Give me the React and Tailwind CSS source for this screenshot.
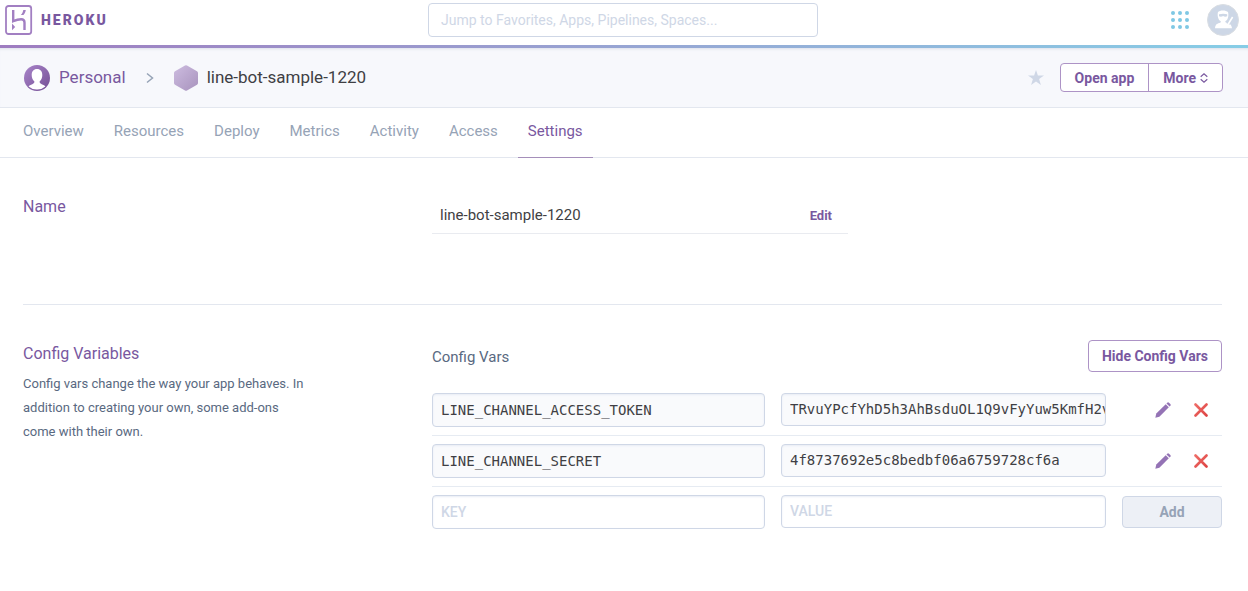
import React from "react";

const tabs = ["Overview", "Resources", "Deploy", "Metrics", "Activity", "Access", "Settings"];

const configVars = [
  { key: "LINE_CHANNEL_ACCESS_TOKEN", value: "TRvuYPcfYhD5h3AhBsduOL1Q9vFyYuw5KmfH2v" },
  { key: "LINE_CHANNEL_SECRET", value: "4f8737692e5c8bedbf06a6759728cf6a" },
];

function HerokuMark() {
  return (
    <svg width="28" height="30" viewBox="0 0 28 30" fill="none" aria-hidden="true">
      <rect x="1" y="1" width="25.200" height="28" rx="2.500" stroke="#a27fc2" strokeWidth="1.800" />
      <path d="M8.200 5v11.200c2.300-1 5.200-2 8-2 2.500 0 3.300 1.300 3.300 3.300V25" stroke="#a27fc2" strokeWidth="2.400" />
      <path d="M15.800 10c1.400-1.400 2.200-3.200 2.500-5h2.500c-.3 1.900-1.100 3.600-2.400 5z" fill="#a27fc2" />
      <path d="M7 18.600v6.600l3.200-3.300z" fill="#a27fc2" />
    </svg>
  );
}

function PersonalAvatar() {
  return (
    <svg width="26" height="26" viewBox="0 0 26 26" aria-hidden="true">
      <defs>
        <linearGradient id="personal" x1="0" y1="0" x2="1" y2="1">
          <stop offset="0" stopColor="#a985ca" />
          <stop offset="1" stopColor="#744e94" />
        </linearGradient>
      </defs>
      <circle cx="13" cy="13" r="13" fill="url(#personal)" />
      <path
        d="M13 4c-3.400 0-5.300 2.500-5.300 6 0 2.800 1 5 2.600 6.300.3 1.500-.4 2.200-2 2.900-1.700.7-3.100 1.200-3.700 2.300A12 12 0 0 0 13 24.500a12 12 0 0 0 8.400-3c-.6-1.100-2-1.600-3.700-2.300-1.600-.7-2.300-1.400-2-2.900 1.600-1.300 2.600-3.500 2.600-6.300 0-3.500-1.900-6-5.300-6z"
        fill="#fff"
      />
    </svg>
  );
}

function AppHexagon() {
  return (
    <svg width="24" height="26" viewBox="0 0 24 26" aria-hidden="true">
      <defs>
        <linearGradient id="hexagon" x1="0" y1="0" x2="1" y2="1">
          <stop offset="0" stopColor="#cdbce0" />
          <stop offset="1" stopColor="#a893bd" />
        </linearGradient>
      </defs>
      <path
        d="M11 .6a2 2 0 0 1 2 0l10 5.600a2 2 0 0 1 1 1.700v10.200a2 2 0 0 1-1 1.700l-10 5.600a2 2 0 0 1-2 0L1 19.800a2 2 0 0 1-1-1.700V7.900a2 2 0 0 1 1-1.700z"
        fill="url(#hexagon)"
      />
    </svg>
  );
}

function DotsIcon() {
  const steps = [2, 9, 16];
  return (
    <svg width="18" height="18" viewBox="0 0 18 18" fill="#7fc8e4" aria-hidden="true">
      {steps.map((y) => steps.map((x) => <circle key={`${x}-${y}`} cx={x} cy={y} r="2" />))}
    </svg>
  );
}

function NinjaAvatar() {
  return (
    <svg width="32" height="32" viewBox="0 0 32 32" aria-hidden="true">
      <circle cx="16" cy="16" r="15.500" fill="#cdd7e6" stroke="#d9dde2" />
      <path
        d="M11 8C12.500 6 19 5.800 21 8c.6 2 .5 4.500-.3 6.500-.5 1.300-1.400 2.300-2.500 2.900.2.900.8 1.300 2.100 1.600 2.600.7 4.300 1.800 4.700 5.300H8c.5-3.500 1.600-4.600 4.300-5.300 1.200-.3 1.600-.7 1.600-1.600-1.200-.6-2-1.600-2.500-2.900-.8-2-1-4.500-.4-6.500z"
        fill="#fff"
      />
      <path d="M12 10.300c2.800-.7 5.600-.7 8.200 0v1.900c-1.200.6-2.700.6-4.100-.1-1.400.7-2.900.7-4.100.1z" fill="#cdd7e6" />
      <path d="M21 20l4.500-7.500" stroke="#cdd7e6" strokeWidth="3.400" />
      <path d="M21 20.500l4.600-7.500" stroke="#fff" strokeWidth="1.600" />
    </svg>
  );
}

function PencilIcon() {
  return (
    <svg width="16" height="16" viewBox="0 0 16 16" fill="#9473b5" aria-hidden="true">
      <path d="M.3 15.700l1-4.100L10.700 2.200l3.100 3.100-9.400 9.400z" />
      <path d="M11.500 1.400l.7-.7a1.300 1.300 0 0 1 1.800 0l1.300 1.300a1.300 1.300 0 0 1 0 1.800l-.7.7z" />
    </svg>
  );
}

function CrossIcon() {
  return (
    <svg width="14" height="14" viewBox="0 0 14 14" fill="none" aria-hidden="true">
      <defs>
        <linearGradient id="cross" gradientUnits="userSpaceOnUse" x1="0" y1="0" x2="14" y2="14">
          <stop offset="0" stopColor="#f0716b" />
          <stop offset="1" stopColor="#dc4040" />
        </linearGradient>
      </defs>
      <path d="M1.500 1.500l11 11M12.500 1.500l-11 11" stroke="url(#cross)" strokeWidth="2.600" strokeLinecap="round" />
    </svg>
  );
}

const field =
  "block w-full rounded border border-[#cfd7e6] px-2 pb-[6px] font-[DejaVu_Sans_Mono,monospace] text-sm text-[#3f3f44] shadow-[inset_0_1px_2px_#e8edf5] outline-none placeholder:font-[Roboto,sans-serif] placeholder:font-medium placeholder:text-[#cfd7e6] placeholder:opacity-100";

export default function App() {
  return (
    <div className="bg-white font-[Roboto,sans-serif] text-[#3f3f44]">
      <header className="grid h-[45px] grid-cols-[1fr_390px_1fr] items-start pr-1.5 pl-1">
        <a href="#home" className="flex items-center gap-2 pt-[5px] pl-px text-sm font-black tracking-[2px] text-[#79589f]">
          <HerokuMark />
          HEROKU
        </a>
        <input
          type="search"
          aria-label="Jump to"
          placeholder="Jump to Favorites, Apps, Pipelines, Spaces..."
          className="mt-[3px] h-[34px] w-full rounded border border-[#cfd7e6] bg-white px-3 text-sm outline-none placeholder:text-[#cfd7e6] placeholder:opacity-100"
        />
        <div className="flex items-center justify-end gap-[18px] pt-1 pr-[3px]">
          <button type="button" aria-label="Products">
            <DotsIcon />
          </button>
          <button type="button" aria-label="Account">
            <NinjaAvatar />
          </button>
        </div>
      </header>
      <div className="h-[3px] bg-linear-to-r from-[#9e7cc0] to-[#86cde6]" />

      <div className="flex h-[60px] items-center border-b border-[#e3e7ef] bg-[#f7f8fc] pr-[25px] pl-6 text-[17px] shadow-[inset_0_3px_3px_-2px_#dcdfe9]">
        <a href="#personal" className="flex items-center gap-[9px] text-[#79589f]">
          <PersonalAvatar />
          Personal
        </a>
        <svg className="mx-5" width="8" height="12" viewBox="0 0 8 12" fill="none" stroke="#96a3b6" strokeWidth="1.500" aria-hidden="true">
          <path d="M1 1.500L6.500 6 1 10.500" />
        </svg>
        <h1 className="flex items-center gap-[9px]">
          <AppHexagon />
          line-bot-sample-1220
        </h1>
        <div className="ml-auto flex items-center gap-4">
          <button type="button" aria-label="Favorite">
            <svg width="16" height="15" viewBox="0 0 16 15" fill="#cfd7e6" aria-hidden="true">
              <path d="M8 0l1.900 5.400 6.100.1-4.900 3.600L12.900 15 8 11.500 3.100 15l1.800-5.900L0 5.500l6.100-.1z" />
            </svg>
          </button>
          <div className="flex h-[29px] divide-x divide-[#ad93c6] rounded border border-[#ad93c6] bg-white text-sm font-bold text-[#79589f]">
            <button type="button" className="px-[14px]">
              Open app
            </button>
            <button type="button" className="flex items-center gap-1 px-[14px]">
              More
              <svg width="8" height="10" viewBox="0 0 8 10" fill="none" stroke="#79589f" strokeWidth="1.200" aria-hidden="true">
                <path d="M.7 3.700L4 .8l3.300 2.900M.7 6.300L4 9.200l3.300-2.900" />
              </svg>
            </button>
          </div>
        </div>
      </div>

      <nav className="flex h-[50px] gap-[10px] border-b border-[#e3e7ef] pl-[13px] text-[15px]">
        {tabs.map((tab) => (
          <a
            key={tab}
            href={`#${tab.toLowerCase()}`}
            aria-current={tab === "Settings" ? "page" : undefined}
            className={
              tab === "Settings"
                ? "h-[50px] border-b border-[#a58fba] px-[10px] leading-[46px] text-[#79589f]"
                : "h-[50px] px-[10px] leading-[46px] text-[#96a3b6]"
            }
          >
            {tab}
          </a>
        ))}
      </nav>

      <main className="pr-[26px] pl-[23px]">
        <section className="grid h-[147px] grid-cols-[409px_1fr] border-b border-[#e3e7ef] pt-9">
          <h2 className="text-base leading-[26px] text-[#79589f]">Name</h2>
          <div className="flex h-10 max-w-[416px] items-center justify-between border-b border-[#e9ebf0] pt-1 pr-4 pl-2 text-[15px]">
            <span>line-bot-sample-1220</span>
            <button type="button" className="text-[13px] font-bold text-[#79589f]">
              Edit
            </button>
          </div>
        </section>

        <section className="grid grid-cols-[409px_1fr] pt-[35px]">
          <div className="max-w-[288px] pt-px">
            <h2 className="text-base leading-[26px] text-[#79589f]">Config Variables</h2>
            <p className="pt-[5px] text-[13px] leading-6 text-[#596981]">
              Config vars change the way your app behaves. In addition to creating your own, some add-ons come with
              their own.
            </p>
          </div>
          <div>
            <div className="flex h-[45px] items-start justify-between">
              <h3 className="pt-[5px] text-[15px] leading-6 text-[#596981]">Config Vars</h3>
              <button
                type="button"
                className="h-8 rounded border border-[#ad93c6] bg-white px-[13px] text-sm font-bold text-[#79589f]"
              >
                Hide Config Vars
              </button>
            </div>
            <table className="block w-full">
              <tbody className="block divide-y divide-[#e6ebf2]">
                {configVars.map((item) => (
                  <tr key={item.key} className="grid grid-cols-[333fr_325fr_100px] gap-4 py-2">
                    <td className="p-0">
                      <input aria-label="Key" readOnly defaultValue={item.key} className={`${field} bg-[#f9fafc] pt-[6px]`} />
                    </td>
                    <td className="p-0">
                      <input
                        aria-label={`Value of ${item.key}`}
                        readOnly
                        defaultValue={item.value}
                        className={`${field} bg-[#f9fafc] pt-[5px] pr-0`}
                      />
                    </td>
                    <td className="flex items-center justify-end gap-[23px] p-0 pr-[14px]">
                      <button type="button" aria-label={`Edit ${item.key}`}>
                        <PencilIcon />
                      </button>
                      <button type="button" aria-label={`Delete ${item.key}`}>
                        <CrossIcon />
                      </button>
                    </td>
                  </tr>
                ))}
                <tr className="grid grid-cols-[333fr_325fr_100px] gap-4 py-2">
                  <td className="p-0">
                    <input aria-label="New key" placeholder="KEY" className={`${field} bg-white pt-[6px]`} />
                  </td>
                  <td className="p-0">
                    <input aria-label="New value" placeholder="VALUE" className={`${field} bg-white pt-[5px]`} />
                  </td>
                  <td className="p-0 pt-px">
                    <button
                      type="button"
                      className="h-8 w-full rounded border border-[#cfd7e6] bg-[#edf0f6] text-sm font-bold text-[#96a3b6]"
                    >
                      Add
                    </button>
                  </td>
                </tr>
              </tbody>
            </table>
          </div>
        </section>
      </main>
    </div>
  );
}
